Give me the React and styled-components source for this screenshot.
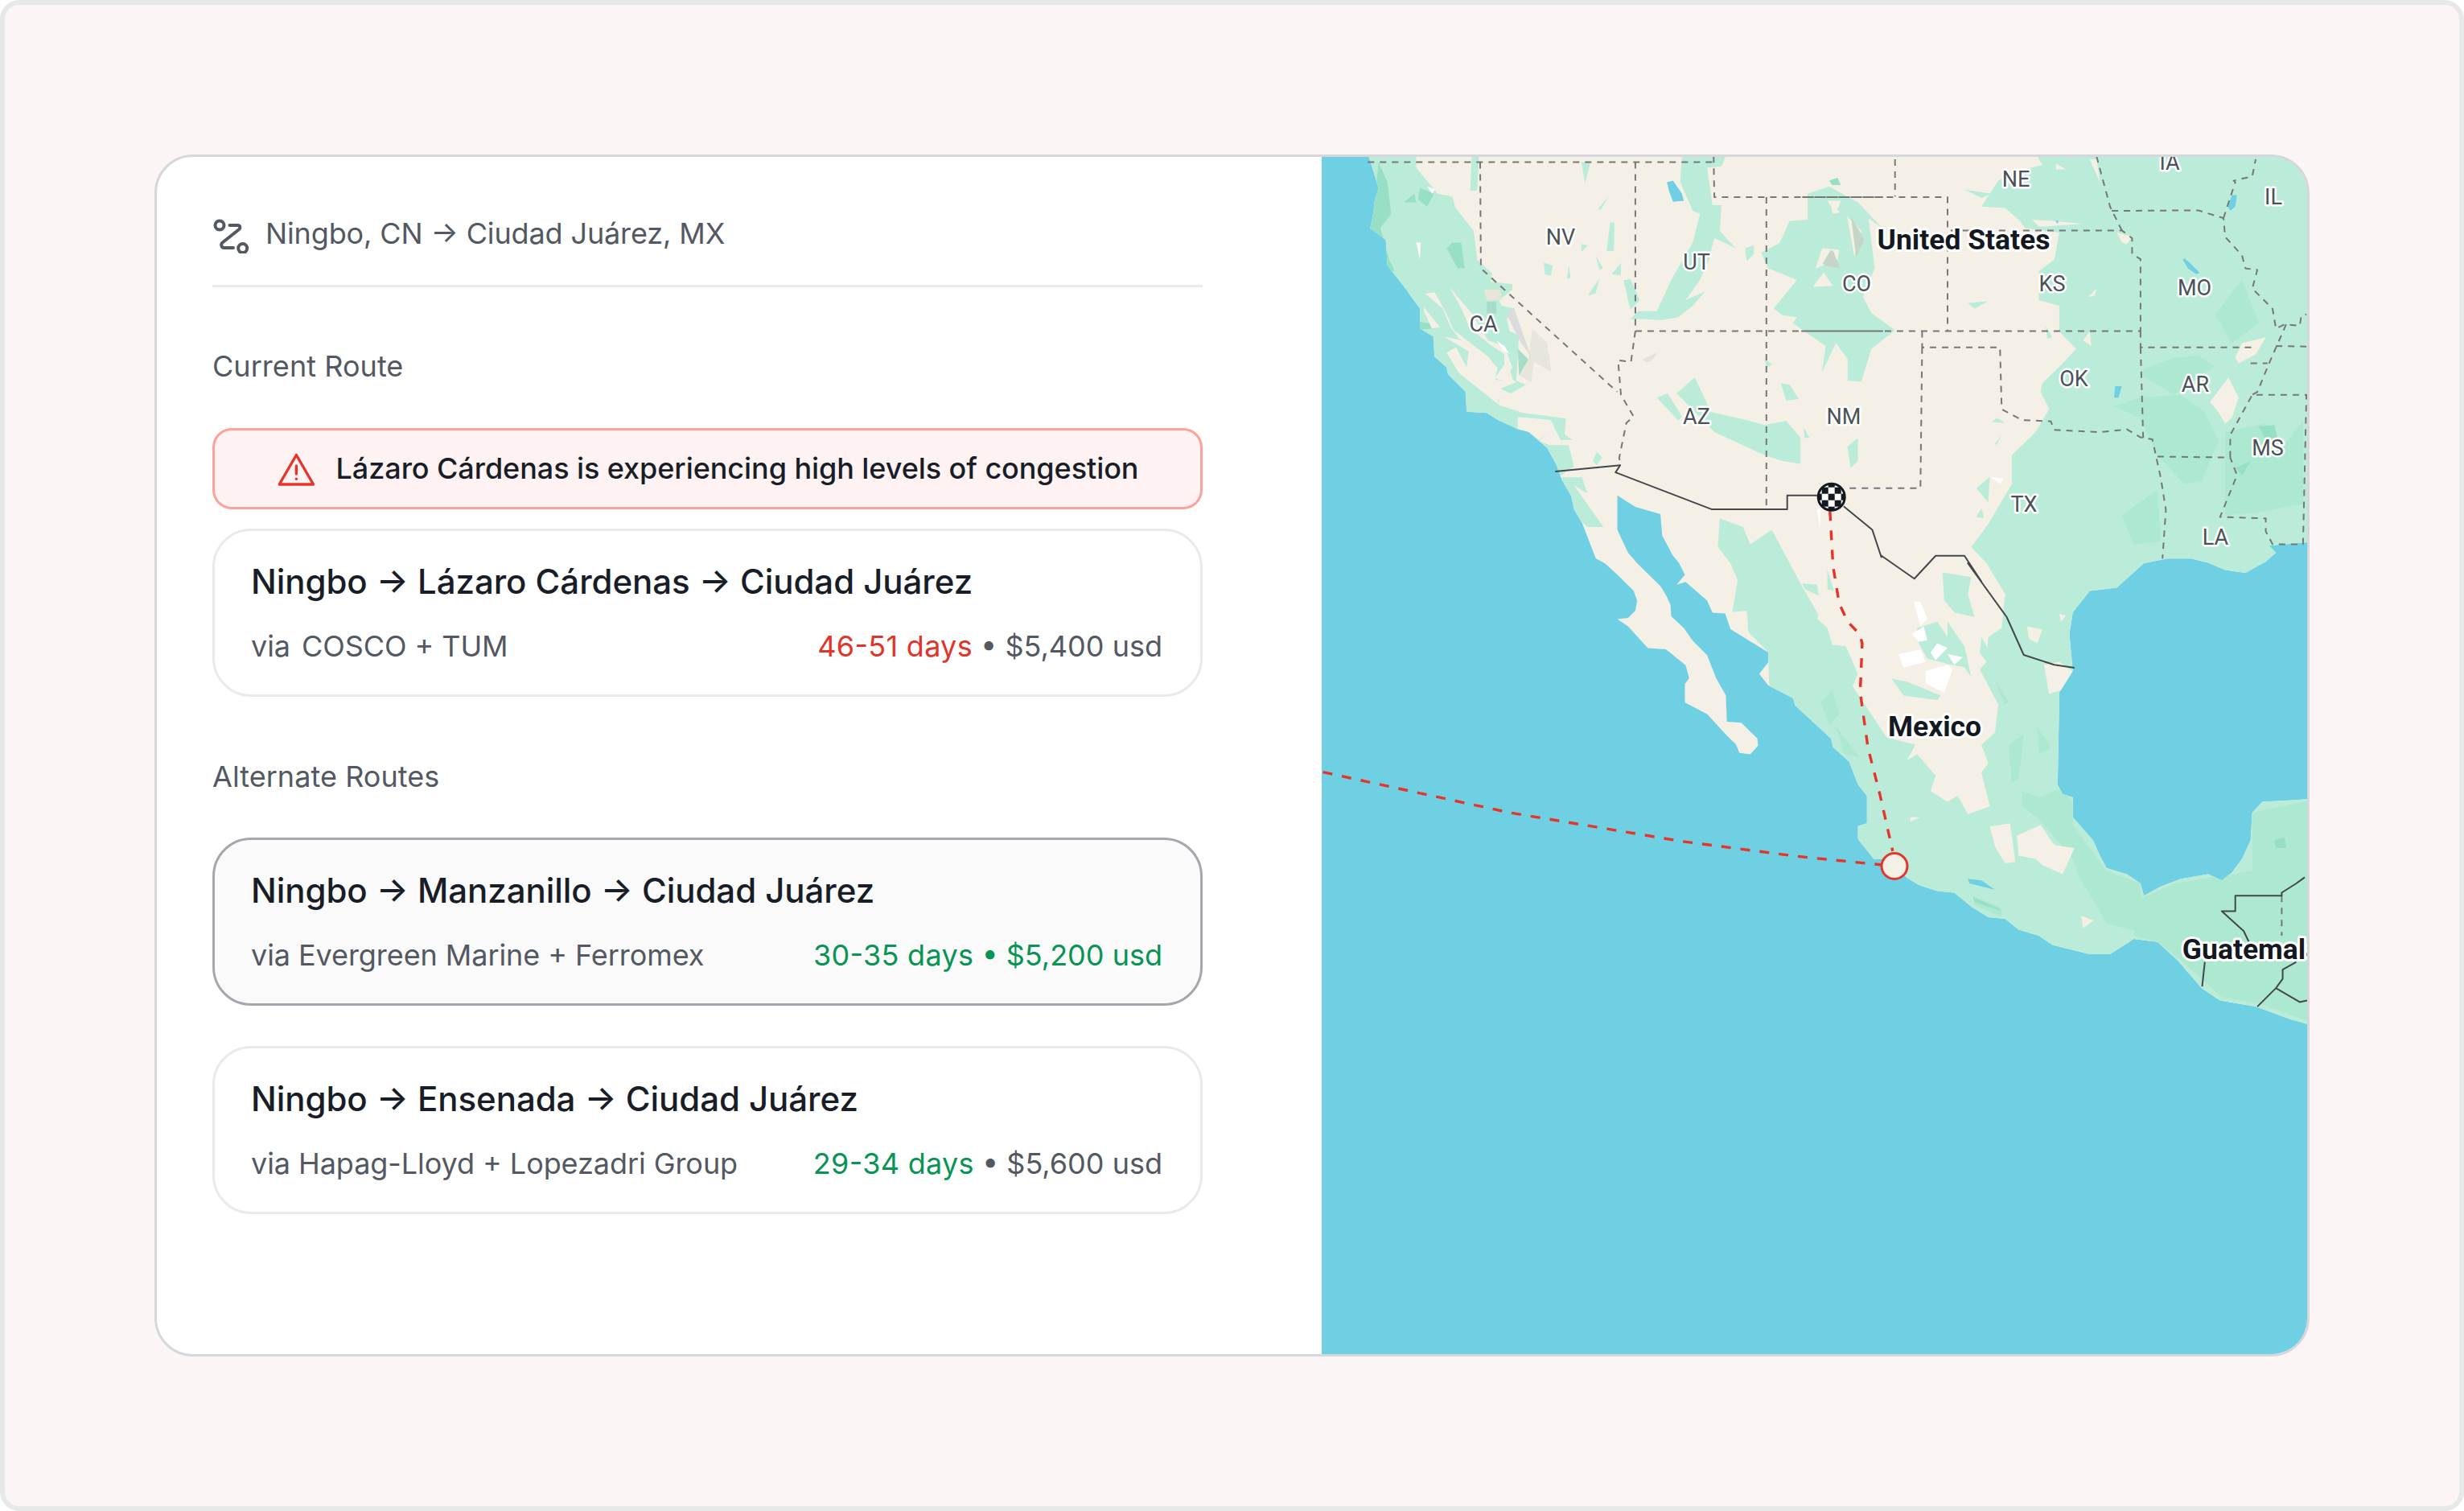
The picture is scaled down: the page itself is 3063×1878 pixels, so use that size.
import React from "react";
import styled, { createGlobalStyle } from "styled-components";

const Global = createGlobalStyle`
  html, body { margin: 0; padding: 0; background: #fff; }
  body {
    font-family: Inter, "Liberation Sans", sans-serif;
    font-feature-settings: "calt" 1, "liga" 1;
  }
`;

const Frame = styled.div`
  box-sizing: border-box;
  width: 3063px;
  height: 1878px;
  padding: 186px;
  background: #fbf5f5;
  border: 6px solid #e7e9e8;
  border-radius: 24px;
`;
const Card = styled.div`
  box-sizing: border-box;
  height: 1494px;
  display: flex;
  overflow: hidden;
  background: #fff;
  border: 3px solid #d5d7da;
  border-radius: 48px;
`;
const Panel = styled.section`
  box-sizing: border-box;
  flex: 0 0 1448px;
  padding: 69px 148px 0 69px;
`;
const MapPanel = styled.div`
  flex: 1;
  min-width: 0;
  background: #6fd0e4;
`;
const MapSvg = styled.svg`
  display: block;
  width: 100%;
  height: 100%;
`;
const Header = styled.header`
  display: flex;
  align-items: center;
  gap: 18px;
  height: 54px;
  padding-bottom: 36px;
  border-bottom: 3px solid #e9eaeb;
  color: #535862;
  font-size: 36px;
  line-height: 54px;
`;
const HeaderText = styled.span`
  margin-bottom: 3px;
  letter-spacing: -0.13px;
`;
const SectionLabel = styled.h2`
  margin: ${(p) => p.$top}px 0 ${(p) => p.$bottom}px;
  color: #535862;
  font-size: 36px;
  font-weight: 400;
  line-height: 54px;
  letter-spacing: 0.05px;
`;
const Alert = styled.div`
  box-sizing: border-box;
  display: flex;
  align-items: center;
  justify-content: center;
  gap: 26px;
  height: 101px;
  margin-bottom: 24px;
  background: #fef3f2;
  border: 3px solid #fda29b;
  border-radius: 24px;
  color: #181d27;
  font-size: 36px;
  font-weight: 500;
  line-height: 54px;
`;
const AlertText = styled.span`
  margin-bottom: 2px;
  letter-spacing: -0.07px;
`;
const RouteList = styled.div`
  display: flex;
  flex-direction: column;
  gap: 50px;
`;
const RouteCard = styled.article`
  box-sizing: border-box;
  height: 209px;
  padding: 33px 45px;
  background: ${(p) => (p.$selected ? "#fafafa" : "#fff")};
  border: 3px solid ${(p) => (p.$selected ? "#a4a7ae" : "#e9eaeb")};
  border-radius: 48px;
`;
const RouteTitle = styled.h3`
  margin: 0 0 23px;
  color: #181d27;
  font-size: 42px;
  font-weight: 500;
  line-height: 60px;
  letter-spacing: -0.05px;
`;
const RouteMeta = styled.div`
  display: flex;
  justify-content: space-between;
  color: #535862;
  font-size: 36px;
  line-height: 54px;
`;
const Via = styled.span`
  letter-spacing: -0.07px;
`;
const Carrier = styled.span`
  margin-left: ${(p) => p.$gap || 0}px;
`;
const Stats = styled.span`
  margin-right: 2px;
`;
const Tone = styled.span`
  color: ${(p) => (p.$tone === "bad" ? "#e1352a" : p.$tone === "good" ? "#079455" : "#535862")};
  letter-spacing: ${(p) => (p.$wide ? "0.3px" : "0")};
`;
const MapLabel = styled.text`
  font-family: Roboto, "Liberation Sans", sans-serif;
  font-size: ${(p) => (p.$major ? 35.5 : 27)}px;
  font-weight: ${(p) => (p.$major ? 700 : 400)};
  fill: ${(p) => (p.$major ? "#14181f" : "#4b5158")};
  stroke: #fff;
  stroke-width: ${(p) => (p.$major ? 6 : 5)}px;
  stroke-linejoin: round;
  paint-order: stroke;
  text-anchor: middle;
  dominant-baseline: central;
`;

const frames = {
  a: [1640, 180, 2.24, 2.8],
  b: [2240, 180, 2.376, 2.8],
  c: [1640, 700, 2.24, 2.8],
  d: [2240, 700, 2.376, 2.613],
  e: [1760, 340, 3, 3],
};
// Traced map outlines are noted in several map tiles; this brings them to one coordinate system.
const pts = (...segs) => {
  const out = [];
  for (let i = 0; i < segs.length; i += 2) {
    const [ox, oy, sx, sy] = frames[segs[i]];
    segs[i + 1].trim().split(/\s+/).forEach((p) => {
      const [x, y] = p.split(",").map(Number);
      out.push(`${(ox + x / sx).toFixed(1)},${(oy + y / sy).toFixed(1)}`);
    });
  }
  return out.join(" ");
};

const LAND = pts(
  "a", "135,30 150,90 165,150 155,190 150,240 142,290 185,330 190,420 240,500",
  "e", "0,110 15,130 15,205 65,235 70,310 115,350 120,375 185,440 190,515 265,520 305,545 380,580 420,590 490,650 525,715 545,770 580,830 590,880 620,930",
  "a", "770,1440 795,1456",
  "c", "830,40 875,95 885,130 880,165 860,190 830,195 860,220 915,295 965,300 1000,335 1020,355 1030,400 1018,420 1018,485 1050,505 1080,525 1135,600 1160,630 1170,660 1200,665 1222,635 1220,610 1175,555 1135,552 1132,460 1105,400 1080,320 1040,270 1015,225 980,185 978,145 965,110 950,80 885,0",
  "a", "860,1420 830,1340 830,1220 880,1260 950,1285 955,1360 985,1430 1002,1456",
  "c", "1018,40 995,75 1020,65 1080,130 1095,172 1130,175 1145,230 1185,260 1250,310 1250,345 1225,385 1250,425 1320,470 1325,495 1425,610 1430,640 1475,690 1500,770 1525,810 1525,905 1500,915 1500,960 1545,1030",
  "d", "235,960 315,1025 345,1045 400,1065 450,1070 500,1115 550,1150 600,1155 640,1190 700,1210 740,1240 850,1270 910,1270 980,1220 1050,1230 1110,1290 1180,1380 1235,1420 1340,1440 1440,1480 1568,1520 1568,760 1440,770 1360,775 1330,810 1325,900 1300,960 1270,1005 1240,1030 1200,1010 1120,1025 1060,1050 1010,1080 1000,1040 960,1010 900,990 880,950 860,900 800,825 800,760 770,750 755,720 760,450 760,420 800,350 790,230 800,160 850,90 930,80 1010,0",
  "b", "1080,1440 1150,1440 1200,1455 1250,1480 1310,1490 1370,1450 1400,1420 1380,1395 1568,1375 1568,0"
);

const GREEN = [
  // east US, south Mexico and the Sierra Madre as one sweep
  pts(
    "b", "690,30 710,70 640,90 580,125 530,215 600,220 640,260 660,290 760,305 745,400 700,440 700,540 760,560 760,650 810,710 770,760 710,830 705,860 730,920 690,1000 620,1080 620,1180 550,1320 500,1400 545,1456",
    "d", "545,0 600,100 590,210 550,240 545,320 525,345 580,460 570,550 530,590 550,650 530,680 555,790 490,815 460,755 430,775 380,740 395,690 340,620 310,640 335,590 250,565 150,400 165,360 130,270 90,265 75,210 45,180",
    "c", "1390,180 1340,70 1310,0",
    "a", "1260,1340 1200,1390 1180,1330 1115,1300 1110,1400 1145,1456",
    "c", "1165,60 1150,170 1190,165 1195,240 1250,310 1260,700",
    "d", "100,1568 1568,1568",
    "b", "1568,0 690,0"
  ),
  // California, coast to the Sierra, then down to northern Baja
  pts(
    "a", "135,30 270,30 270,80 330,170 370,180 380,220 430,300 440,400",
    "e", "285,0 280,30 360,40 360,60 310,100 320,120 365,130 340,170 350,215 385,230 375,400 410,415 350,450 310,470 310,490 400,520 560,540 555,600 585,620 540,620 510,560 490,595 460,625 500,640 570,640 590,720 530,760 620,760 640,820 590,790 700,945 640,945 570,880 300,700 -100,500",
    "a", "50,300"
  ),
  pts("e", "660,700 675,665 695,685 675,715"),
  pts("e", "645,80 685,20 670,75"),
  pts("e", "775,25 800,20 835,100 800,135"),
  pts("e", "800,170 830,140 900,140 890,165 815,170"),
  // Utah
  pts("a", "1010,30 1135,30 1120,75 1080,80 1095,210 1120,210 1115,300 1160,360 1100,325 1085,400 1060,470 1020,540 1075,510 1040,560 1000,600 950,610 880,605 880,585 940,580 980,470 1040,340 1060,240 1040,230 1005,130"),
  // Rockies
  pts("a", "1310,265 1360,260 1360,170 1420,145 1500,200 1568,290", "b", "80,160 130,190 195,240 215,430 180,530 205,585 275,645 205,710 175,825 135,820 135,745 100,690 60,790 55,700", "a", "1400,790 1410,700 1340,640 1265,570 1330,470 1250,430"),
  pts("a", "1185,360 1210,350 1210,380 1190,405"),
  pts("a", "1230,375 1300,330 1250,430"),
  // Arizona and New Mexico
  pts("a", "995,865 1045,810 1065,860 1090,930 1180,955 1240,975 1300,960 1340,1020 1340,1110 1290,1100 1240,1080 1100,1000 1070,960"),
  pts("a", "940,880 970,865 1010,945 1000,960"),
  pts("a", "1285,830 1310,835 1335,885 1300,890"),
  pts("a", "1350,985 1365,1020 1350,1020"),
  pts("a", "1500,1020 1500,1100 1480,1125 1470,1050"),
  pts("a", "1240,745 1262,765 1245,775"),
  // Nevada slivers
  pts("a", "730,60 755,60 740,135"),
  pts("a", "810,270 822,270 820,370 800,370"),
  pts("a", "625,410 650,420 645,455 628,450"),
  pts("a", "770,385 790,430 780,435"),
  pts("a", "695,420 700,465 690,465"),
  pts("a", "780,465 750,520 755,525"),
  pts("a", "840,410 840,455 815,450"),
  pts("a", "805,180 775,225 785,225"),
  pts("a", "730,345 748,350 730,372"),
  pts("a", "425,30 445,30 440,160 420,160"),
  // Kansas / Texas specks
  pts("b", "490,550 550,545 510,570"),
  pts("b", "720,630 740,670 725,675"),
  pts("b", "480,155 560,170 530,185"),
  pts("b", "80,125 105,115 115,140 90,140"),
  pts("b", "560,965 600,968 575,950"),
  pts("b", "515,1195 555,1155 550,1245"),
  pts("b", "570,1040 590,1010 575,1045"),
  pts("b", "515,1295 530,1265 538,1300"),
  pts("d", "415,30 500,45 490,100 510,175 450,160 420,120"),
  pts("d", "340,210 400,190 490,340 440,330 370,310 345,260"),
  pts("d", "430,190 480,270 500,370 450,290 430,250"),
  pts("d", "265,375 310,385 410,430 400,445 300,430"),
  pts("d", "530,240 555,290 545,320 525,290"),
  pts("d", "75,20 95,90 75,85"),
  pts("d", "0,65 45,70 50,105 10,85"),
];

const BEIGE = [
  pts("e", "30,125 90,200 60,205 30,140"),
  pts("e", "35,75 70,70 115,150 140,210 270,310 305,355 160,240 130,200 100,130"),
  pts("e", "125,50 210,150 270,250 330,270 360,350 325,400 295,390 330,340 330,300 270,260 200,200 170,130"),
  pts("e", "115,295 150,275 190,350 197,290 105,235 170,250 305,350 295,395 325,400 345,340 362,395 375,405 315,430 360,450 305,470 310,490 160,370"),
  pts("e", "380,535 500,545 515,565 490,595 460,620 420,590 380,580"),
  pts("a", "1375,495 1405,445 1430,490"),
  pts("a", "1420,190 1450,235 1430,240"),
  pts("a", "1470,250 1490,390 1510,300"),
  pts("a", "1270,590 1300,650 1330,600"),
  pts("b", "35,490 60,450 90,490"),
  pts("b", "75,195 115,195 100,240"),
  pts("b", "60,360 110,365 105,400 40,430"),
  pts("b", "850,50 880,130 870,50"),
  pts("b", "750,65 780,85 750,85"),
  pts("b", "930,305 975,320 960,345 945,340"),
  pts("b", "1300,690 1370,670 1340,730 1290,760 1280,740"),
  pts("b", "1260,810 1290,880 1270,950 1250,970 1230,930 1205,895"),
  pts("b", "850,650 855,700 830,680"),
  pts("b", "870,500 865,525 845,530"),
  pts("b", "680,260 740,265 830,275 700,285"),
  pts("d", "555,855 615,845 630,970 600,975 570,920"),
  pts("d", "635,885 705,850 745,915 805,925 770,1010 710,980 690,960 640,950"),
  pts("d", "825,1145 862,1160 830,1185"),
  pts("d", "320,825 350,825 320,840"),
  pts("d", "715,330 760,320 810,360 770,410 730,425"),
  pts("d", "665,205 710,215 695,260 670,245"),
  pts("d", "760,165 780,170 765,190"),
  pts("d", "565,95 600,100 590,150"),
];

const DARK = [
  pts("b", "1220,590 1300,470 1350,620 1270,690"),
  pts("b", "1010,780 1100,740 1170,735 1220,770 1100,870 1000,800"),
  pts("b", "920,910 1000,880 1120,870 1190,930 1230,1030 1180,1170 1130,1180 1050,1080 1000,950"),
  pts("b", "945,1290 1050,1200 1060,1380 980,1390"),
  pts("b", "1250,1000 1370,970 1420,1050 1480,960 1480,1250 1340,1280 1250,1290"),
  pts("d", "1000,1090 1100,1040 1330,1000 1330,810 1500,770 1500,1490 1350,1430 1240,1410 1110,1280 1050,1230 980,1210"),
  pts("d", "650,740 700,760 770,730 800,780 800,850 900,1000 1000,1040 1005,1200 900,1170 820,1020 800,960 700,830 650,790"),
  pts("d", "610,590 655,555 640,700 620,715"),
  pts("d", "695,535 720,570 735,600 700,620"),
  pts("d", "565,370 610,450 600,460"),
  pts("d", "55,450 90,415 110,490 80,525"),
  pts("d", "100,530 170,630 125,620"),
  pts("d", "505,1080 590,1120 590,1150 510,1110"),
];

const DEEP = [
  pts("a", "165,60 190,130 200,240 170,290 195,400 210,440 180,440 140,290 155,190 160,120"),
  pts("a", "280,150 320,170 300,215 275,190"),
  pts("a", "370,340 395,340 405,430 385,430 355,360"),
  pts("a", "235,200 265,170 270,200"),
  pts("e", "15,180 50,185 70,205 15,210"),
  pts("b", "80,125 105,115 115,140 90,140"),
  pts("b", "1350,980 1395,975 1405,1020 1365,1020"),
  pts("b", "1280,1125 1325,1100 1300,1150"),
  pts("d", "1395,900 1425,890 1430,925 1400,925"),
  pts("d", "505,1085 580,1120 590,1130 510,1100"),
];

const WHITE = [
  pts("d", "285,295 350,280 365,320 300,340"),
  pts("d", "380,290 400,260 430,275 395,315"),
  pts("d", "365,350 430,330 445,345 420,420 365,390"),
  pts("d", "430,295 475,305 450,330"),
  pts("d", "330,125 350,125 370,180 350,205"),
  pts("d", "325,230 360,205 370,250 345,255"),
  pts("a", "270,340 282,340 280,400"),
  pts("a", "300,145 322,155 315,170"),
  pts("a", "1385,1270 1395,1265 1395,1330"),
  pts("b", "555,1155 595,1162 585,1180"),
  pts("e", "300,250 330,270 350,300 325,285"),
];

const STIPPLE = [
  ["#e6e6dc", pts("e", "435,205 490,260 505,365 440,330 430,405 385,380 420,320")],
  ["#e6e6dc", pts("e", "255,60 315,60 320,100 265,100")],
  ["#a9dcc8", pts("e", "380,280 420,320 385,380")],
  ["#a9dcc8", pts("e", "265,105 300,105 300,150 265,150")],
  ["#dcdcdc", pts("e", "365,125 400,225 430,310 390,255 340,155")],
  ["#e2e2da", pts("e", "845,320 900,295 880,325 860,330")],
  ["#c5d5c8", pts("a", "1430,365 1450,430 1405,420")],
  ["#c5d5c8", pts("b", "85,365 110,420 60,415")],
  ["#c5d5c8", pts("b", "145,250 185,330 160,390")],
];

const LAKES = [
  pts("a", "968,130 985,125 1010,170 1015,195 985,198 975,165"),
  pts("b", "1270,175 1285,175 1280,215 1265,230 1258,215"),
  pts("b", "1130,395 1145,410 1175,445 1165,450 1140,430 1125,400"),
  pts("b", "925,840 945,840 935,880 922,880"),
  pts("b", "748,265 758,265 755,275"),
  pts("d", "490,1025 530,1030 570,1060 530,1050 495,1040"),
];

const STATE_LINES = [
  pts("a", "135,60 1100,60"),
  pts("a", "880,60 880,648"),
  pts("a", "448,60 450,430 830,860"),
  pts("a", "880,648 868,755 832,750 840,870 875,945 855,968 835,1090 840,1112"),
  pts("a", "1098,40 1100,182 1568,182", "b", "0,182 430,182 430,648"),
  pts("b", "275,50 275,180"),
  pts("a", "1245,182 1245,1268"),
  pts("a", "880,648 1568,648", "b", "0,648 1000,648 1000,398 975,380 975,325 945,298 430,298"),
  pts("b", "355,648 355,705 585,705 590,920 650,958 735,962 745,992 880,1000 960,990 1000,1018 1035,1025 1060,1160 1075,1270 1065,1440"),
  pts("b", "355,705 350,1195 130,1195"),
  pts("b", "870,40 910,215 945,298"),
  pts("b", "915,230 1170,228 1245,255 1250,320 1300,385 1310,430 1345,435 1330,500 1390,570 1400,640 1425,625 1470,630 1475,595 1490,590"),
  pts("b", "1245,255 1280,130 1275,125 1330,110 1340,50"),
  pts("b", "1000,648 1000,705 1340,705"),
  pts("b", "1000,705 1008,1020"),
  pts("b", "1050,1085 1265,1088"),
  pts("b", "1265,1088 1265,1010 1330,870 1490,870 1480,1390 1390,1390 1370,1345 1370,1300 1235,1295 1285,1150 1265,1088"),
  pts("b", "1430,625 1380,760 1345,860 1330,870"),
  pts("b", "1325,760 1375,760"),
  pts("b", "1400,700 1490,702"),
  pts("d", "1417,1080 1417,1210"),
];

const COUNTRY_LINES = [
  pts("a", "657,1137 838,1115 825,1140 1092,1268 1303,1268 1303,1220 1390,1220"),
  pts("a", "1460,1258 1540,1340 1565,1435", "b", "235,1430 332,1510 395,1430 480,1430 530,1520", "d", "490,0 605,175 655,298 745,330 805,340"),
  pts("d", "1320,1230 1305,1195 1240,1130 1280,1130 1280,1080 1417,1080 1417,1070 1460,1040 1485,1020"),
  pts("d", "1190,1295 1182,1375"),
  pts("d", "1460,1295 1420,1320 1420,1350 1400,1380 1345,1440"),
  pts("d", "1400,1380 1470,1425 1492,1420"),
];

const SEA_ROUTE = pts("c", "10,727 530,868 1010,968 1330,1020 1568,1050", "d", "237,980");
const LAND_ROUTE = pts("a", "1422,1275", "d", "92,10 110,130 135,190 170,230 178,260 172,420 195,600 230,750 268,935");

const LABELS = [
  ["NV", 1940, 295], ["UT", 2109, 326], ["CA", 1844, 403], ["CO", 2308, 353], ["AZ", 2109, 518],
  ["NM", 2292, 518], ["NE", 2506, 223], ["IA", 2697, 202], ["IL", 2826, 245], ["KS", 2551, 353],
  ["MO", 2728, 358], ["OK", 2578, 471], ["AR", 2729, 478], ["MS", 2819, 557], ["TX", 2516, 627], ["LA", 2754, 668],
];
const MAJOR = [
  ["United States", 2441, 298], ["Mexico", 2405, 903], ["Guatemala", 2799, 1180],
];

const CHECKS = [];
for (let r = 0; r < 5; r++) {
  for (let c = 0; c < 5; c++) {
    if ((r + c) % 2 === 0) CHECKS.push([2276.7 - 20 + c * 8, 617.7 - 20 + r * 8]);
  }
}

const Polys = ({ list, fill }) => (
  <g fill={fill}>
    {list.map((p, i) => (
      <polygon key={i} points={p} />
    ))}
  </g>
);

const Lines = ({ list, stroke, width, dash }) => (
  <g fill="none" stroke={stroke} strokeWidth={width} strokeDasharray={dash} strokeLinejoin="round">
    {list.map((p, i) => (
      <polyline key={i} points={p} />
    ))}
  </g>
);

const RouteMap = () => (
  <MapSvg viewBox="1643 195 1225 1488" preserveAspectRatio="none" role="img" aria-label="Map of the route">
    <defs>
      <clipPath id="land">
        <polygon points={LAND} />
      </clipPath>
      <clipPath id="finish">
        <circle cx="2276.7" cy="617.7" r="17" />
      </clipPath>
    </defs>
    <rect x="1643" y="195" width="1225" height="1488" fill="#6fd0e4" />
    <polygon points={LAND} fill="#f5f0e6" />
    <g clipPath="url(#land)">
      <Polys list={GREEN} fill="#bbecd9" />
      <Polys list={DARK} fill="#ade8d0" />
      <Polys list={DEEP} fill="#98e0c5" />
      <Polys list={BEIGE} fill="#f5f0e6" />
      {STIPPLE.map(([c, p], i) => (
        <polygon key={i} points={p} fill={c} />
      ))}
      <Polys list={WHITE} fill="#ffffff" />
      <Polys list={LAKES} fill="#6fd0e4" />
    </g>
    <Lines list={STATE_LINES} stroke="#75777a" width={2} dash="8 7" />
    <Lines list={COUNTRY_LINES} stroke="#43474c" width={2} />
    <Lines list={[SEA_ROUTE, LAND_ROUTE]} stroke="#e5352b" width={3.4} dash="12 12" />
    {LABELS.map(([t, x, y]) => (
      <MapLabel key={t} x={x} y={y}>{t}</MapLabel>
    ))}
    {MAJOR.map(([t, x, y]) => (
      <MapLabel key={t} $major x={x} y={y}>{t}</MapLabel>
    ))}
    <circle cx="2355" cy="1076.5" r="16" fill="#f5f0e6" stroke="#e5352b" strokeWidth="3" />
    <circle cx="2276.7" cy="617.7" r="17" fill="#fff" />
    <g clipPath="url(#finish)" fill="#14181f">
      {CHECKS.map(([x, y]) => (
        <rect key={`${x}-${y}`} x={x} y={y} width="8" height="8" />
      ))}
    </g>
    <circle cx="2276.7" cy="617.7" r="16.5" fill="none" stroke="#14181f" strokeWidth="3" />
  </MapSvg>
);

const RouteIcon = () => (
  <svg width="48" height="48" viewBox="0 0 48 48" fill="none" stroke="#535862" strokeWidth="4" strokeLinecap="round" strokeLinejoin="round">
    <circle cx="9" cy="13" r="5.5" />
    <circle cx="37.7" cy="41.6" r="5.5" />
    <path d="M21.5 13H31.5c2.8 0 3.8 3 1.8 5L12.5 34.5c-2.4 2 -1.2 6.5 1.8 6.5H26" />
  </svg>
);

const WarningIcon = () => (
  <svg width="48" height="48" viewBox="0 0 48 48" fill="none" stroke="#e5352b" strokeWidth="3.4" strokeLinecap="round" strokeLinejoin="round">
    <path d="M24.4 6.5 45.5 43H3.2Z" />
    <path d="M24.4 20V30" />
    <path d="M24.4 36.3h.02" />
  </svg>
);

const ROUTES = [
  {
    title: "Ningbo → Manzanillo → Ciudad Juárez",
    via: "via Evergreen Marine + Ferromex",
    days: "30-35 days",
    daysTone: "good",
    cost: "$5,200 usd",
    costTone: "good",
    selected: true,
  },
  {
    title: "Ningbo → Ensenada → Ciudad Juárez",
    via: "via Hapag-Lloyd + Lopezadri Group",
    days: "29-34 days",
    daysTone: "good",
    cost: "$5,600 usd",
  },
];

export default function App() {
  return (
    <>
      <Global />
      <Frame>
        <Card>
          <Panel>
            <Header>
              <RouteIcon />
              <HeaderText>Ningbo, CN → Ciudad Juárez, MX</HeaderText>
            </Header>
            <SectionLabel $top={71} $bottom={50}>Current Route</SectionLabel>
            <Alert>
              <WarningIcon />
              <AlertText>Lázaro Cárdenas is experiencing high levels of congestion</AlertText>
            </Alert>
            <RouteCard>
              <RouteTitle>Ningbo → Lázaro Cárdenas → Ciudad Juárez</RouteTitle>
              <RouteMeta>
                <Via>via<Carrier $gap={14}>COSCO + TUM</Carrier></Via>
                <Stats><Tone $tone="bad" $wide>46-51 days</Tone> • $5,400 usd</Stats>
              </RouteMeta>
            </RouteCard>
            <SectionLabel $top={72} $bottom={49}>Alternate Routes</SectionLabel>
            <RouteList>
              {ROUTES.map((r) => (
                <RouteCard key={r.title} $selected={r.selected}>
                  <RouteTitle>{r.title}</RouteTitle>
                  <RouteMeta>
                    <Via>{r.via}</Via>
                    <Stats>
                      <Tone $tone={r.daysTone} $wide>{r.days}</Tone>
                      <Tone $tone={r.costTone}> • {r.cost}</Tone>
                    </Stats>
                  </RouteMeta>
                </RouteCard>
              ))}
            </RouteList>
          </Panel>
          <MapPanel>
            <RouteMap />
          </MapPanel>
        </Card>
      </Frame>
    </>
  );
}
